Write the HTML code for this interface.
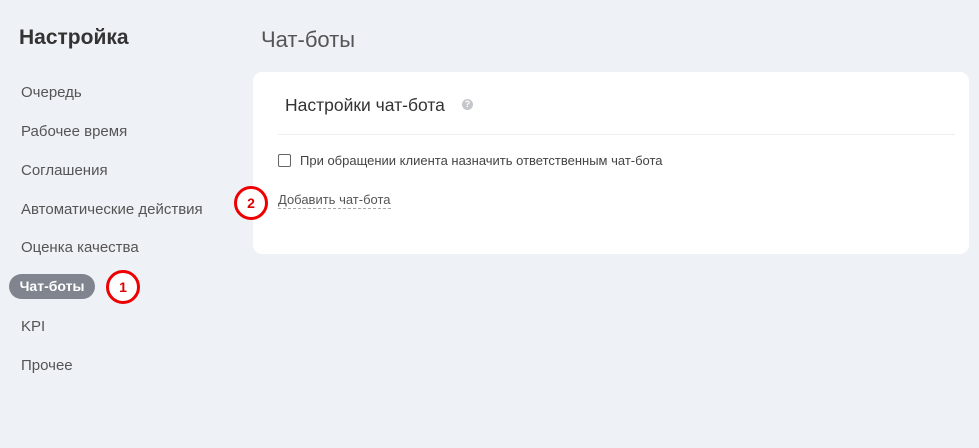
<!DOCTYPE html>
<html><head><meta charset="utf-8"><style>
body{margin:0;width:979px;height:448px;background:#eef1f5;font-family:"Liberation Sans",sans-serif;position:relative;overflow:hidden;color:#333}
.a{position:absolute;white-space:nowrap}
.m{font-size:15px;color:#555;left:21px}
.circ{position:absolute;width:28px;height:28px;border:3px solid #e00;border-radius:50%;background:#fff;color:#d00;font-weight:bold;font-size:14px;text-align:center;line-height:28px}
</style></head><body>
<div class="a" style="left:19px;top:26px;font-size:21px;font-weight:bold;color:#333">Настройка</div>
<div class="a" style="left:261px;top:27px;font-size:22px;color:#555">Чат-боты</div>
<div class="a m" style="top:84px">Очередь</div>
<div class="a m" style="top:123px">Рабочее время</div>
<div class="a m" style="top:162px">Соглашения</div>
<div class="a m" style="top:201px">Автоматические действия</div>
<div class="a m" style="top:239px">Оценка качества</div>
<div class="a" style="left:9px;top:274px;width:86px;height:25px;border-radius:13px;background:#80848e;color:#fff;font-weight:bold;font-size:14px;line-height:25px;text-align:center">Чат-боты</div>
<div class="circ" style="left:106px;top:270px">1</div>
<div class="a m" style="top:318px">KPI</div>
<div class="a m" style="top:357px">Прочее</div>
<div class="a" style="left:253px;top:72px;width:716px;height:182px;background:#fff;border-radius:9px"></div>
<div class="a" style="left:285px;top:95px;font-size:17.5px;color:#333">Настройки чат-бота</div>
<div class="a" style="left:462px;top:99px;width:11px;height:11px;border-radius:50%;background:#c4c6ca;color:#fff;font-size:9px;line-height:11px;text-align:center;font-weight:bold">?</div>
<div class="a" style="left:278px;top:134px;width:677px;height:1px;background:#eceef1"></div>
<div class="a" style="left:278px;top:154px;width:11px;height:11px;border:1px solid #666;border-radius:2px;background:#fff"></div>
<div class="a" style="left:300px;top:153px;font-size:13px;color:#444">При обращении клиента назначить ответственным чат-бота</div>
<div class="a" style="left:278px;top:192px;font-size:13px;color:#555;border-bottom:1px dashed #aaa;line-height:16px">Добавить чат-бота</div>
<div class="circ" style="left:234px;top:186px">2</div>
</body></html>
